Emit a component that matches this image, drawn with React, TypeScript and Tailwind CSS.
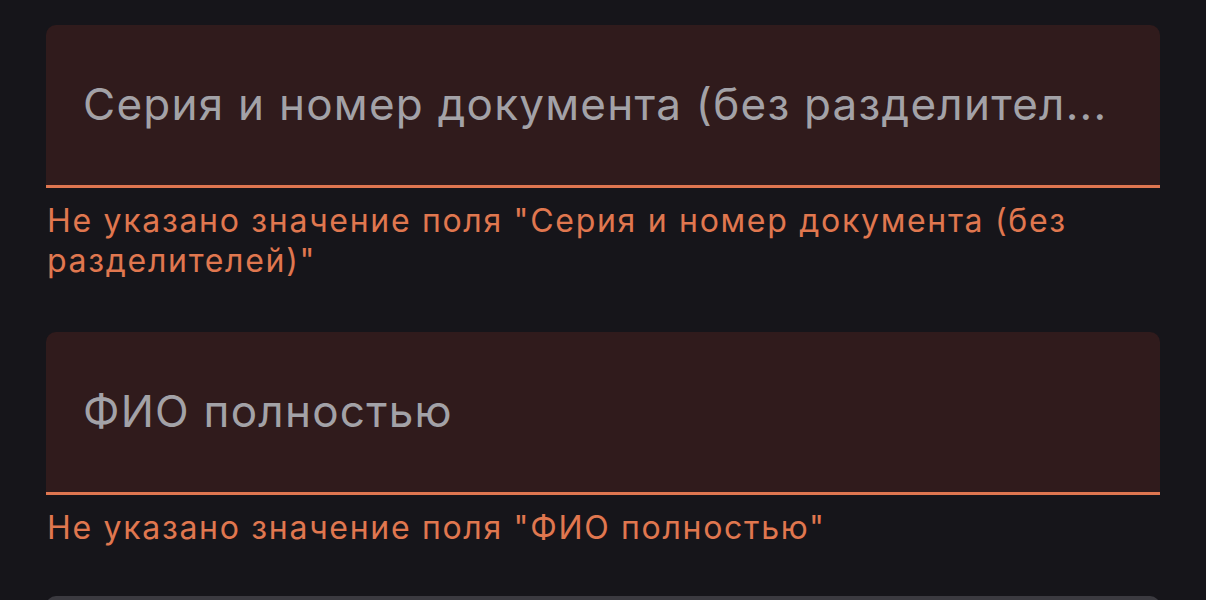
import React from "react";

function Field({ placeholder, error }: { placeholder: string; error: string }) {
  return (
    <div>
      <div className="h-[163px] bg-[#301b1c] rounded-t-[10px] border-b-[3px] border-[#df7650] flex items-center pl-[37px] pb-[2px]">
        <span className="text-[44px] leading-[50px] tracking-[1.25px] text-[#a3a2a7] whitespace-nowrap">{placeholder}</span>
      </div>
      <div className="mt-[13px] pl-[1px] text-[32px] leading-[40px] tracking-[1.7px] text-[#e0774f]">{error}</div>
    </div>
  );
}

export default function App() {
  return (
    <div
      className="h-[600px] w-full overflow-hidden bg-[#16151a] px-[46px] pt-[25px]"
      style={{ fontFamily: "Inter, 'Noto Sans', sans-serif" }}
    >
      <Field
        placeholder="Серия и номер документа (без разделител..."
        error={'Не указано значение поля "Серия и номер документа (без разделителей)"'}
      />
      <div className="mt-[51px]">
        <Field placeholder="ФИО полностью" error={'Не указано значение поля "ФИО полностью"'} />
      </div>
      <div className="mt-[48px] h-[40px] bg-[#3b3a40] rounded-t-[10px]" />
    </div>
  );
}
